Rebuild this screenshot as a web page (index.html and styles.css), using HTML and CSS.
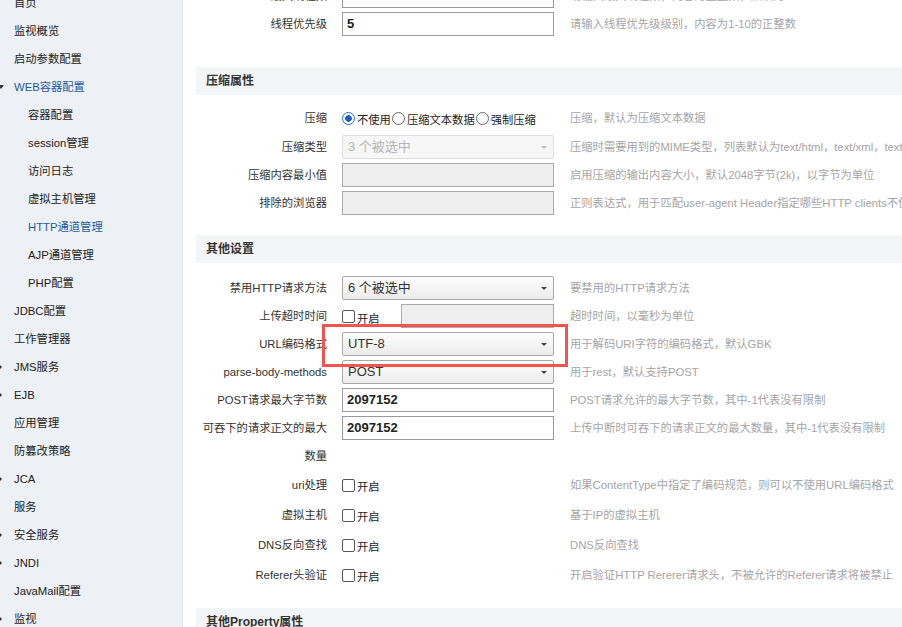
FILE: index.html
```html
<!DOCTYPE html>
<html lang="zh-CN">
<head>
  <meta charset="UTF-8">
  <title>HTTP通道管理</title>
  <link rel="stylesheet" href="styles.css">
</head>
<body>
<div class="page">
  <aside class="sidebar">
    <a class="nav-item">首页</a>
    <a class="nav-item">监视概览</a>
    <a class="nav-item">启动参数配置</a>
    <a class="nav-item open active">WEB容器配置</a>
    <a class="nav-item sub">容器配置</a>
    <a class="nav-item sub">session管理</a>
    <a class="nav-item sub">访问日志</a>
    <a class="nav-item sub">虚拟主机管理</a>
    <a class="nav-item sub active">HTTP通道管理</a>
    <a class="nav-item sub">AJP通道管理</a>
    <a class="nav-item sub">PHP配置</a>
    <a class="nav-item">JDBC配置</a>
    <a class="nav-item">工作管理器</a>
    <a class="nav-item folded">JMS服务</a>
    <a class="nav-item folded">EJB</a>
    <a class="nav-item">应用管理</a>
    <a class="nav-item">防篡改策略</a>
    <a class="nav-item folded">JCA</a>
    <a class="nav-item">服务</a>
    <a class="nav-item folded">安全服务</a>
    <a class="nav-item folded">JNDI</a>
    <a class="nav-item">JavaMail配置</a>
    <a class="nav-item folded">监视</a>
  </aside>

  <main class="main">
    <div class="row">
      <div class="label">最大线程数</div>
      <div class="ctrl"><div class="input">200</div></div>
      <div class="help">请输入最大线程数，内容为正整数，默认为200</div>
    </div>
    <div class="row">
      <div class="label">线程优先级</div>
      <div class="ctrl"><div class="input">5</div></div>
      <div class="help">请输入线程优先级级别，内容为1-10的正整数</div>
    </div>

    <h3 class="section first">压缩属性</h3>
    <div class="group">
      <div class="row tall">
        <div class="label">压缩</div>
        <div class="ctrl">
          <span class="radio checked"></span><span class="opt">不使用</span>
          <span class="radio"></span><span class="opt">压缩文本数据</span>
          <span class="radio"></span><span class="opt">强制压缩</span>
        </div>
        <div class="help">压缩，默认为压缩文本数据</div>
      </div>
      <div class="row">
        <div class="label">压缩类型</div>
        <div class="ctrl"><div class="select disabled">3 个被选中<span class="caret"></span></div></div>
        <div class="help">压缩时需要用到的MIME类型，列表默认为text/html，text/xml，text/plain</div>
      </div>
      <div class="row">
        <div class="label">压缩内容最小值</div>
        <div class="ctrl"><div class="input off"></div></div>
        <div class="help">启用压缩的输出内容大小，默认2048字节(2k)，以字节为单位</div>
      </div>
      <div class="row">
        <div class="label">排除的浏览器</div>
        <div class="ctrl"><div class="input off"></div></div>
        <div class="help">正则表达式，用于匹配user-agent Header指定哪些HTTP clients不使用压缩</div>
      </div>
    </div>

    <h3 class="section">其他设置</h3>
    <div class="group other">
      <div class="row">
        <div class="label">禁用HTTP请求方法</div>
        <div class="ctrl"><div class="select">6 个被选中<span class="caret"></span></div></div>
        <div class="help">要禁用的HTTP请求方法</div>
      </div>
      <div class="row">
        <div class="label">上传超时时间</div>
        <div class="ctrl">
          <span class="check"></span><span class="opt">开启</span>
          <div class="input off short"></div>
        </div>
        <div class="help">超时时间，以毫秒为单位</div>
      </div>
      <div class="row">
        <div class="label">URL编码格式</div>
        <div class="ctrl"><div class="select">UTF-8<span class="caret"></span></div></div>
        <div class="help">用于解码URI字符的编码格式，默认GBK</div>
      </div>
      <div class="row">
        <div class="label">parse-body-methods</div>
        <div class="ctrl"><div class="select">POST<span class="caret"></span></div></div>
        <div class="help">用于rest，默认支持POST</div>
      </div>
      <div class="row">
        <div class="label">POST请求最大字节数</div>
        <div class="ctrl"><div class="input">2097152</div></div>
        <div class="help">POST请求允许的最大字节数，其中-1代表没有限制</div>
      </div>
      <div class="row">
        <div class="label">可吞下的请求正文的最大数量</div>
        <div class="ctrl"><div class="input">2097152</div></div>
        <div class="help">上传中断时可吞下的请求正文的最大数量，其中-1代表没有限制</div>
      </div>
      <div class="row tall">
        <div class="label">uri处理</div>
        <div class="ctrl"><span class="check"></span><span class="opt">开启</span></div>
        <div class="help">如果ContentType中指定了编码规范，则可以不使用URL编码格式</div>
      </div>
      <div class="row tall">
        <div class="label">虚拟主机</div>
        <div class="ctrl"><span class="check"></span><span class="opt">开启</span></div>
        <div class="help">基于IP的虚拟主机</div>
      </div>
      <div class="row tall">
        <div class="label">DNS反向查找</div>
        <div class="ctrl"><span class="check"></span><span class="opt">开启</span></div>
        <div class="help">DNS反向查找</div>
      </div>
      <div class="row tall">
        <div class="label">Referer头验证</div>
        <div class="ctrl"><span class="check"></span><span class="opt">开启</span></div>
        <div class="help">开启验证HTTP Rererer请求头，不被允许的Referer请求将被禁止</div>
      </div>
    </div>

    <h3 class="section">其他Property属性</h3>
  </main>

  <!-- 标注：URL编码格式 -->
  <div class="mark"></div>
</div>
</body>
</html>
```

FILE: styles.css
```css
* {
  margin: 0;
  padding: 0;
  box-sizing: border-box;
}

html, body {
  height: 100%;
  overflow: hidden;
}

body {
  font-family: "Liberation Sans", Arial, "Noto Sans CJK SC", sans-serif;
  font-size: 11.3px;
  color: #333;
  background: #fff;
}

.page {
  position: relative;
  display: flex;
  align-items: flex-start;
  height: 100%;
}

/* 左侧菜单 */
.sidebar {
  width: 183px;
  flex: none;
  margin-top: -11px;
  min-height: calc(100% + 11px);
  background: #edf0f4;
  border-right: 1px solid #e4e8ed;
  display: flex;
  flex-direction: column;
}

.nav-item {
  position: relative;
  display: block;
  line-height: 28px;
  padding-left: 14px;
  color: #222;
  text-decoration: none;
  white-space: nowrap;
}

.nav-item.sub {
  padding-left: 28px;
}

.nav-item.active {
  color: #1f5aa0;
}

.nav-item.open::before,
.nav-item.folded::before {
  content: "";
  position: absolute;
  top: 50%;
  width: 0;
  height: 0;
}

.nav-item.open::before {
  left: -2px;
  margin-top: -2px;
  border-left: 3px solid transparent;
  border-right: 3px solid transparent;
  border-top: 4px solid #333;
}

.nav-item.folded::before {
  left: -1px;
  margin-top: -3px;
  border-top: 3px solid transparent;
  border-bottom: 3px solid transparent;
  border-left: 3px solid #333;
}

/* 内容区 */
.main {
  flex: 1;
  margin-top: -18px;
  padding-left: 13px;
  overflow: hidden;
}

.section {
  height: 28px;
  line-height: 28px;
  margin-top: 18px;
  padding-left: 10px;
  background: #f4f5f7;
  font-size: 12px;
  font-weight: bold;
  color: #333;
}

.section.first {
  margin-top: 29px;
}

.group {
  padding-top: 8px;
}

.group.other {
  padding-top: 11px;
}

.row {
  display: flex;
  align-items: flex-start;
}

.label {
  width: 131px;
  flex: none;
  margin-right: 15px;
  text-align: right;
  line-height: 28px;
  color: #333;
}

.ctrl {
  width: 212px;
  height: 28px;
  flex: none;
  display: flex;
  align-items: center;
}

.row.tall .ctrl,
.row.tall .label,
.row.tall .help {
  height: 30px;
  line-height: 30px;
}

.help {
  margin-left: 16px;
  line-height: 28px;
  white-space: nowrap;
  color: #a5a5a5;
}

.input {
  width: 100%;
  height: 24px;
  line-height: 22px;
  padding-left: 4px;
  border: 1px solid #9a9a9a;
  background: #fff;
  font-size: 13px;
  font-weight: bold;
  color: #222;
}

.input.off {
  background: #efefef;
  border-color: #aaa;
}

.input.short {
  width: 153px;
  margin-left: auto;
}

.select {
  position: relative;
  width: 100%;
  height: 24px;
  line-height: 22px;
  padding-left: 5px;
  border: 1px solid #aaa;
  border-radius: 2px;
  background: linear-gradient(#fdfdfd, #ececec);
  font-size: 13px;
  color: #333;
}

.select.disabled {
  background: #f7f7f7;
  border-color: #ddd;
  color: #b5b5b5;
}

.caret {
  position: absolute;
  right: 6px;
  top: 10px;
  border-left: 3px solid transparent;
  border-right: 3px solid transparent;
  border-top: 3px solid #444;
}

.select.disabled .caret {
  border-top-color: #bbb;
}

.radio,
.check {
  display: inline-block;
  flex: none;
  width: 13px;
  height: 13px;
  border: 1px solid #555;
  background: #fff;
}

.radio {
  border-radius: 50%;
  border-color: #666;
}

.radio.checked {
  border-color: #1a73e8;
  background: radial-gradient(circle, #1a5fc0 0 3px, #fff 3.6px);
}

.check {
  border-radius: 2px;
}

.opt {
  margin: 4px 1px 0 2px;
  color: #222;
}

.mark {
  position: absolute;
  left: 322px;
  top: 324px;
  width: 246px;
  height: 43px;
  border: 3px solid #f25451;
  pointer-events: none;
}
```
